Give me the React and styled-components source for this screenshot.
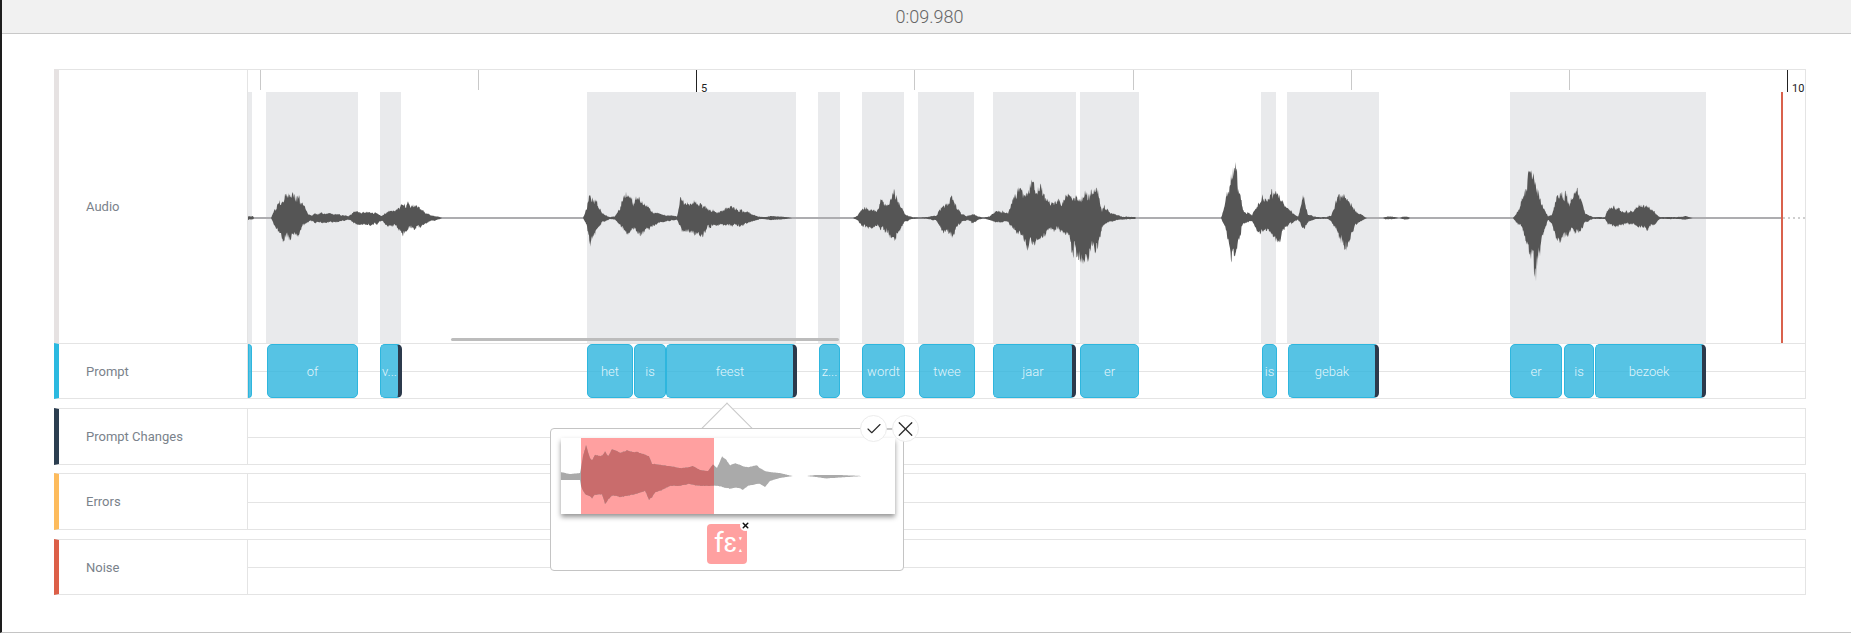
import React from 'react'
import styled, { createGlobalStyle } from 'styled-components'
import { Check, X } from 'lucide-react'

const ORIGIN = 248

// x, amplitude above the centre line, amplitude below it (page pixels)
const WAVE_POINTS = [
  [248,2,2],[253,2,2],[254,0,0],[271,0,0],[273,5,4],[278,16,16],[283,24,25],[290,25,20],[298,22,18],[303,14,8],
  [308,5,4],[312,3,3],[315,5,5],[327,5,5],[337,4,4],[348,2,2],[355,7,6],[363,6,8],[377,5,7],[382,3,3],[387,6,8],
  [397,10,9],[403,14,18],[408,17,12],[420,10,9],[430,3,4],[440,1,1],[442,0,0],
  [583,0,0],[587,12,8],[590,26,30],[593,20,20],[597,17,12],[602,5,5],[610,1,1],[615,2,2],[620,10,8],[623,23,13],
  [628,25,15],[633,18,12],[638,21,18],[642,16,17],[647,15,13],[652,7,10],[660,4,5],[677,2,2],[681,24,12],[685,16,15],
  [695,17,17],[703,15,18],[708,10,10],[717,6,8],[730,12,8],[737,9,9],[747,7,6],[757,2,2],[763,1,1],[770,2,2],[783,1.5,1.5],[793,0,0],
  [853,0,0],[858,3,3],[862,10,8],[868,11,12],[877,7,9],[882,22,12],[885,15,15],[890,17,18],[895,30,22],[900,15,12],
  [905,4,4],[912,1,1],[920,.5,.5],[927,1,1],[937,3,3],[942,13,13],[947,14,16],[953,23,23],[957,13,10],[962,4,4],
  [968,2,2],[973,4,6],[978,2,2],[983,.5,.5],[990,2,2],[995,7,5],[1003,7,4],[1008,5,4],[1016,30,15],[1022,27,20],
  [1027,28,30],[1032,36,33],[1037,30,22],[1040,32,20],[1048,18,15],[1057,17,13],[1068,24,17],[1073,18,35],[1080,24,41],
  [1088,28,42],[1098,29,30],[1102,7,10],[1105,13,6],[1110,5,4],[1123,1.5,1.5],[1135,1,1],[1136,0,0],
  [1221,0,0],[1225,13,10],[1227,27,20],[1231,45,50],[1235,56,40],[1238,35,25],[1243,8,6],[1252,3,3],[1258,16,16],
  [1263,27,17],[1267,17,15],[1273,27,18],[1278,25,30],[1285,13,10],[1292,7,6],[1298,1.5,1.5],[1303,24,13],[1308,4,4],
  [1317,1,1],[1327,1,1],[1331,3,3],[1338,22,17],[1345,26,33],[1350,17,20],[1357,7,6],[1365,1,1],[1367,0,0],
  [1383,0,0],[1386,1.5,1.5],[1392,1.5,1.5],[1395,1,1],[1398,0,0],[1400,0,0],[1403,1.5,1.5],[1408,1.5,1.5],[1410,0,0],
  [1513,0,0],[1518,8,8],[1522,20,12],[1527,40,30],[1530,45,45],[1533,45,50],[1537,36,57],[1538,30,50],[1542,15,20],
  [1548,2,2],[1552,5,5],[1557,25,25],[1562,30,24],[1570,17,15],[1577,30,15],[1580,20,15],[1585,5,5],[1593,1,1],[1605,1,1],
  [1608,10,7],[1615,12,9],[1623,7,7],[1633,7,7],[1640,15,10],[1647,12,12],[1653,8,8],[1660,1,1],[1678,1,1],[1685,2,2],[1693,0,0],
]

// same idea for the zoomed clip, x is relative to the clip box
const CLIP_POINTS = [
  [0,4,4],[9,2,4],[19,3,4],[20,8,10],[22,20,15],[25,31,19],[29,18,21],[31,16,23],[34,21,19],[41,20,19],[44,25,28],[47,20,24],
  [51,27,20],[59,24,21],[66,26,20],[76,24,18],[84,22,15],[88,20,24],[91,12,22],[94,12,17],[101,11,14],[109,10,10],[119,8,10],
  [128,9,8],[132,10,9],[139,6,10],[147,5,10],[152,12,10],[156,8,10],[161,20,11],[164,18,12],[169,11,13],[174,13,12],[177,12,12],
  [182,10,14],[187,9,10],[196,11,8],[199,8,8],[204,5,11],[209,4,5],[219,3,2],[229,.5,.5],[232,0,0],[245,0,0],[255,1,1],[265,1,2.5],[279,1,1.5],[302,0,0],
]

const GAPS = [
  [248,252],[266,358],[380,401],[587,796],[818,840],[862,904],[918,974],[993,1076],[1080,1139],[1261,1276],[1287,1379],[1510,1706],
]

const TICKS = [
  { x: 260 }, { x: 478 }, { x: 696, label: '5' }, { x: 914 }, { x: 1133 }, { x: 1351 }, { x: 1569 }, { x: 1787, label: '10' },
]

const PROMPTS = [
  { from: 248, to: 252, text: '', cut: true },
  { from: 267, to: 358, text: 'of' },
  { from: 380, to: 402, text: 'v...', handle: true },
  { from: 587, to: 633, text: 'het' },
  { from: 634, to: 666, text: 'is' },
  { from: 666, to: 797, text: 'feest', handle: true },
  { from: 819, to: 840, text: 'z...' },
  { from: 862, to: 905, text: 'wordt' },
  { from: 919, to: 975, text: 'twee' },
  { from: 993, to: 1076, text: 'jaar', handle: true },
  { from: 1080, to: 1139, text: 'er' },
  { from: 1262, to: 1277, text: 'is' },
  { from: 1288, to: 1379, text: 'gebak', handle: true },
  { from: 1510, to: 1562, text: 'er' },
  { from: 1564, to: 1594, text: 'is' },
  { from: 1595, to: 1706, text: 'bezoek', handle: true },
]

const TRACKS = [
  { name: 'Prompt Changes', color: '#2c3e50', height: 57, gap: 9 },
  { name: 'Errors', color: '#fdbb5c', height: 57, gap: 8 },
  { name: 'Noise', color: '#dc5f48', height: 56, gap: 9 },
]

function noise(x) {
  const v = Math.sin(x * 12.9898) * 43758.5453
  return v - Math.floor(v)
}

// fine jitter plus a slower wobble, so the outline gets spikes as well as bumps
function grain(x, rough) {
  const fine = noise(x)
  const slow = noise(Math.floor(x / 2.5))
  return 1 - rough + rough * (0.7 * fine + 0.7 * slow)
}

function ampAt(points, x, side) {
  for (let i = 1; i < points.length; i++) {
    if (x <= points[i][0]) {
      const a = points[i - 1]
      const b = points[i]
      const t = (x - a[0]) / (b[0] - a[0] || 1)
      return a[side] + (b[side] - a[side]) * t
    }
  }
  return 0
}

function wavePath(points, center, step, rough) {
  const start = points[0][0]
  const end = points[points.length - 1][0]
  const top = []
  const bottom = []
  for (let x = start; x <= end; x += step) {
    const up = ampAt(points, x, 1) * grain(x, rough)
    const down = ampAt(points, x, 2) * grain(x + 31, rough)
    top.push(`${x} ${(center - up).toFixed(1)}`)
    bottom.unshift(`${x} ${(center + down).toFixed(1)}`)
  }
  return `M${top.join('L')}L${bottom.join('L')}Z`
}

const GlobalStyle = createGlobalStyle`
  html, body {
    margin: 0;
    padding: 0;
    overflow: hidden;
    background: #fff;
  }
  * {
    box-sizing: border-box;
  }
`

const Page = styled.div`
  height: 633px;
  border-left: 2px solid #1d1d1d;
  border-bottom: 1px solid #c4c4c4;
  font-family: Roboto, "Liberation Sans", sans-serif;
`

const Header = styled.header`
  height: 34px;
  padding-left: 6px;
  background: #f1f1f1;
  border-bottom: 1px solid #c8c8c8;
  display: flex;
  align-items: center;
  justify-content: center;
  font-size: 18px;
  font-weight: 300;
  color: #666;
`

const Tracks = styled.main`
  position: relative;
  padding: 35px 45px 0 52px;
`

const Row = styled.section`
  display: flex;
  height: ${p => p.$height}px;
  margin-top: ${p => p.$gap || 0}px;
  border-top: 1px solid #e4e4e4;
  border-bottom: ${p => (p.$open ? 'none' : '1px solid #e4e4e4')};
  border-right: 1px solid #e4e4e4;
  border-left: 5px solid ${p => p.$color};
`

const Label = styled.div`
  width: 189px;
  flex-shrink: 0;
  display: flex;
  align-items: center;
  padding-left: 27px;
  border-right: 1px solid #e4e4e4;
  font-size: 13px;
  font-weight: 400;
  color: #7a828b;
`

const Lane = styled.div`
  position: relative;
  flex: 1;
  &::after {
    content: '';
    position: absolute;
    left: 0;
    right: 0;
    top: 50%;
    border-top: 1px solid #e4e4e4;
    display: ${p => (p.$split ? 'block' : 'none')};
  }
`

const Gap = styled.div.attrs(p => ({ style: { left: p.$from - ORIGIN, width: p.$to - p.$from } }))`
  position: absolute;
  top: 22px;
  bottom: 0;
  background: #e9eaec;
`

const Tick = styled.div.attrs(p => ({ style: { left: p.$x - ORIGIN } }))`
  position: absolute;
  top: 0;
  height: ${p => (p.$major ? 22 : 20)}px;
  border-left: 1px solid ${p => (p.$major ? '#222' : '#c9c9c9')};
`

const TickText = styled.span`
  position: absolute;
  left: 4px;
  top: 12px;
  width: 17px;
  overflow: hidden;
  font-size: 11px;
  line-height: 13px;
  color: #222;
`

const WaveSvg = styled.svg`
  position: absolute;
  left: 0;
  top: 0;
`

const Cursor = styled.div`
  position: absolute;
  left: ${1781 - ORIGIN}px;
  top: 22px;
  bottom: 0;
  width: 2px;
  background: #d9614c;
`

const ScrollBar = styled.div`
  position: absolute;
  left: ${451 - ORIGIN}px;
  width: 388px;
  bottom: 2px;
  height: 3px;
  border-radius: 2px;
  background: #bcbcbc;
`

const Segment = styled.div.attrs(p => ({ style: { left: p.$from - ORIGIN, width: p.$to - p.$from } }))`
  position: absolute;
  top: 0;
  bottom: 0;
  z-index: 1;
  display: flex;
  align-items: center;
  justify-content: center;
  overflow: hidden;
  background: rgba(44, 180, 221, 0.8);
  border: 1px solid #2eb6de;
  border-radius: ${p => (p.$cut ? '0 5px 5px 0' : '5px')};
  border-right: ${p => (p.$handle ? '4px solid #2c3a4c' : '1px solid #2eb6de')};
  font-size: 13px;
  font-weight: 300;
  color: rgba(255, 255, 255, 0.85);
  white-space: nowrap;
`

const PopupAnchor = styled.aside`
  position: absolute;
  z-index: 2;
  left: 548px;
  top: 394px;
  width: 354px;
`

const Arrow = styled.div`
  position: absolute;
  left: 159px;
  top: -18px;
  width: 36px;
  height: 36px;
  transform: rotate(45deg);
  background: #fff;
  border-top: 1px solid #c8c8c8;
  border-left: 1px solid #c8c8c8;
`

const PopupBody = styled.div`
  position: relative;
  height: 143px;
  padding: 9px 8px 0 10px;
  display: flex;
  flex-direction: column;
  align-items: center;
  background: #fff;
  border: 1px solid #c4c4c4;
  border-radius: 4px;
`

const ClipBox = styled.div`
  width: 100%;
  height: 76px;
  flex-shrink: 0;
  background: #fff;
  box-shadow: 0 3px 5px rgba(0, 0, 0, 0.42);
  svg {
    display: block;
  }
`

const Tile = styled.div`
  position: relative;
  width: 40px;
  height: 40px;
  margin-top: 10px;
  margin-right: 2px;
  background: #ffa0a0;
  border-radius: 4px;
`

const TileText = styled.div`
  width: 100%;
  height: 100%;
  overflow: hidden;
  padding-left: 7px;
  font-size: 28px;
  line-height: 38px;
  color: #fff;
  white-space: nowrap;
`

const TileClose = styled.div`
  position: absolute;
  right: -4px;
  top: -4px;
  width: 11px;
  height: 11px;
  border-radius: 50%;
  background: #fff;
  display: flex;
  align-items: center;
  justify-content: center;
  color: #111;
`

const PopupActions = styled.div`
  position: absolute;
  right: -16px;
  top: -14px;
  display: flex;
  align-items: center;
  gap: 5px;
  &::before {
    content: '';
    position: absolute;
    left: 24px;
    right: 24px;
    top: 50%;
    border-top: 1px solid #c8c8c8;
  }
`

const RoundButton = styled.button`
  position: relative;
  width: 27px;
  height: 27px;
  padding: 0;
  display: flex;
  align-items: center;
  justify-content: center;
  background: #fff;
  border: 1px solid #ececec;
  border-radius: 50%;
  color: #2a2a2a;
`

function AudioTrack() {
  const wave = wavePath(WAVE_POINTS, 218, 0.5, 0.42)
  return (
    <Row $height={274} $color="#e6e2e2" $open>
      <Label>Audio</Label>
      <Lane>
        {GAPS.map(g => <Gap key={g[0]} $from={g[0]} $to={g[1]} />)}
        {TICKS.map(t => (
          <Tick key={t.x} $x={t.x} $major={!!t.label}>
            {t.label && <TickText>{t.label}</TickText>}
          </Tick>
        ))}
        <WaveSvg width="1557" height="273" viewBox="248 70 1557 273">
          <rect x="248" y="217" width="1533" height="2" fill="#adadb0" />
          <line x1="1783" y1="218" x2="1805" y2="218" stroke="#cfcfcf" strokeWidth="2" strokeDasharray="2 3" />
          <path d={wave} fill="#555" />
        </WaveSvg>
        <Cursor />
        <ScrollBar />
      </Lane>
    </Row>
  )
}

function PromptTrack() {
  return (
    <Row $height={56} $color="#2bb9e0">
      <Label>Prompt</Label>
      <Lane $split>
        {PROMPTS.map(s => (
          <Segment key={s.from} $from={s.from} $to={s.to} $handle={s.handle} $cut={s.cut}>
            {s.text}
          </Segment>
        ))}
      </Lane>
    </Row>
  )
}

function ClipPopup() {
  const wave = wavePath(CLIP_POINTS, 38, 0.5, 0.05)
  return (
    <PopupAnchor>
      <Arrow />
      <PopupBody>
        <ClipBox>
          <svg width="334" height="76" viewBox="0 0 334 76">
            <defs>
              <clipPath id="picked">
                <rect x="20" y="0" width="133" height="76" />
              </clipPath>
            </defs>
            <rect x="20" y="0" width="133" height="76" fill="#ffa0a0" />
            <path d={wave} fill="#aaa" />
            <path d={wave} fill="#c96c6c" clipPath="url(#picked)" />
          </svg>
        </ClipBox>
        <Tile>
          <TileText>fɛː</TileText>
          <TileClose><X size={9} strokeWidth={4} /></TileClose>
        </Tile>
        <PopupActions>
          <RoundButton><Check size={18} strokeWidth={1.5} /></RoundButton>
          <RoundButton><X size={26} strokeWidth={1.2} /></RoundButton>
        </PopupActions>
      </PopupBody>
    </PopupAnchor>
  )
}

export default function App() {
  return (
    <Page>
      <GlobalStyle />
      <Header>0:09.980</Header>
      <Tracks>
        <AudioTrack />
        <PromptTrack />
        {TRACKS.map(t => (
          <Row key={t.name} $height={t.height} $gap={t.gap} $color={t.color}>
            <Label>{t.name}</Label>
            <Lane $split />
          </Row>
        ))}
        <ClipPopup />
      </Tracks>
    </Page>
  )
}
